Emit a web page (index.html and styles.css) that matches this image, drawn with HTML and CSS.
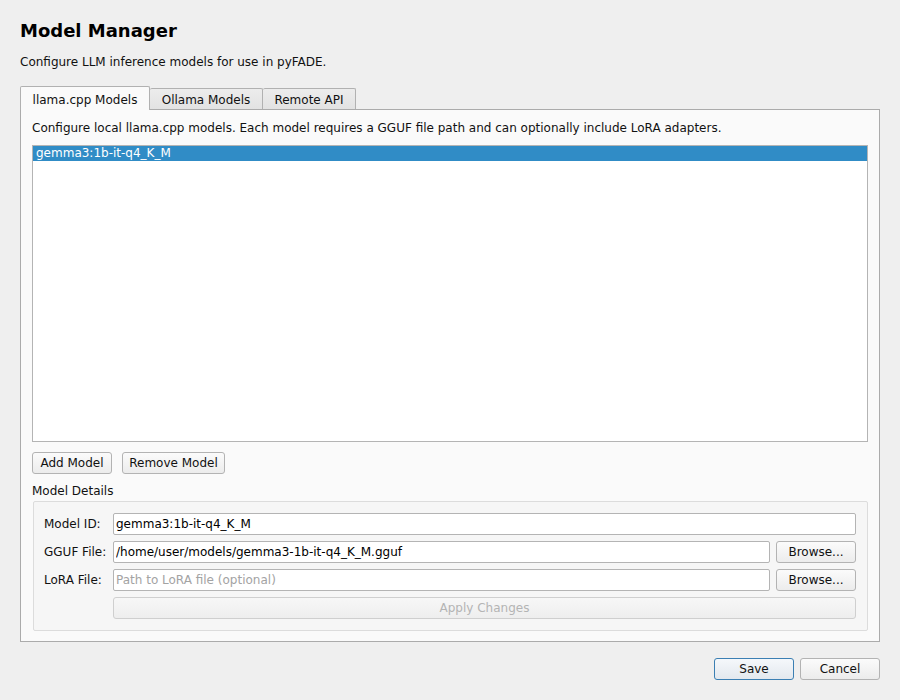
FILE: index.html
```html
<!DOCTYPE html>
<html>
<head>
<meta charset="utf-8">
<link rel="stylesheet" href="styles.css">
</head>
<body>
<div class="dialog">
  <h1 class="title">Model Manager</h1>
  <p class="subtitle">Configure LLM inference models for use in pyFADE.</p>
  <div class="tabs">
    <div class="tabbar">
      <div class="tab active">llama.cpp Models</div>
      <div class="tab">Ollama Models</div>
      <div class="tab">Remote API</div>
    </div>
    <div class="pane">
      <p class="desc">Configure local llama.cpp models. Each model requires a GGUF file path and can optionally include LoRA adapters.</p>
      <div class="list">
        <div class="item selected">gemma3:1b-it-q4_K_M</div>
      </div>
      <div class="btnrow">
        <button class="btn btn-add">Add Model</button>
        <button class="btn btn-remove">Remove Model</button>
      </div>
      <div class="grouptitle">Model Details</div>
      <div class="group">
        <label class="lbl">Model ID:</label>
        <div class="field"><input class="input" type="text" value="gemma3:1b-it-q4_K_M"></div>
        <label class="lbl">GGUF File:</label>
        <div class="field"><input class="input" type="text" value="/home/user/models/gemma3-1b-it-q4_K_M.gguf"><button class="btn btn-browse">Browse...</button></div>
        <label class="lbl">LoRA File:</label>
        <div class="field"><input class="input" type="text" placeholder="Path to LoRA file (optional)"><button class="btn btn-browse">Browse...</button></div>
        <span></span>
        <div class="field"><button class="btn btn-apply" disabled>Apply Changes</button></div>
      </div>
    </div>
  </div>
  <div class="footer">
    <button class="btn btn-default">Save</button>
    <button class="btn btn-cancel">Cancel</button>
  </div>
</div>
</body>
</html>
```

FILE: styles.css
```css
* { box-sizing: border-box; }
html, body {
  margin: 0;
  padding: 0;
  background: #efefef;
}
body {
  font-family: "DejaVu Sans", "Liberation Sans", sans-serif;
  font-size: 12px;
  line-height: 14px;
  color: #111;
}
.dialog {
  width: 900px;
  height: 700px;
  padding: 20px 20px 0 20px;
}
.title {
  margin: 0;
  font-size: 18px;
  line-height: 22px;
  font-weight: bold;
  color: #000;
}
.subtitle {
  margin: 13px 0 0 0;
  line-height: 14px;
}
.tabs {
  margin-top: 17px;
}
.tabbar {
  display: flex;
  align-items: flex-end;
  height: 23px;
}
.tab {
  height: 21px;
  line-height: 19px;
  padding: 2px 0 0 0;
  text-align: center;
  white-space: nowrap;
  border: 1px solid #b1b1b1;
  border-bottom: none;
  border-left: none;
  border-radius: 2px 2px 0 0;
  background: linear-gradient(#ececec, #e2e2e2);
  color: #111;
}
.tab.active {
  height: 24px;
  margin-bottom: -1px;
  border-left: 1px solid #b1b1b1;
  background: #fafafa;
  position: relative;
  z-index: 1;
  padding: 4px 0 0 0;
  width: 130px;
}
.tab:nth-child(2) { width: 113px; }
.tab:nth-child(3) { width: 93px; }
.pane {
  width: 860px;
  height: 533px;
  border: 1px solid #ababab;
  background: #fafafa;
  padding: 11px 11px 10px 11px;
}
.desc {
  margin: 0;
  line-height: 14px;
}
.list {
  margin-top: 10px;
  height: 297px;
  background: #fff;
  border: 1px solid #b4b4b4;
}
.item {
  height: 15px;
  line-height: 15px;
  padding-left: 3px;
}
.item.selected {
  background: #308cc6;
  color: #fff;
}
.btnrow {
  display: flex;
  gap: 10px;
  margin-top: 10px;
}
.btn {
  font-family: inherit;
  font-size: 12px;
  color: #111;
  height: 22px;
  padding: 0;
  white-space: nowrap;
  text-align: center;
  border: 1px solid #b3b3b3;
  border-radius: 3px;
  background: linear-gradient(#fbfbfb, #ececec);
  line-height: 20px;
}
.btn-add { width: 80px; }
.btn-remove { width: 103px; }
.grouptitle {
  margin-top: 10px;
  padding-left: 0;
  line-height: 14px;
}
.group {
  margin: 3px 0 0 1px;
  height: 130px;
  border: 1px solid #dcdcdc;
  border-radius: 2px;
  background: #f6f6f6;
  padding: 11px 11px 11px 10px;
  display: grid;
  grid-template-columns: 63px 1fr;
  column-gap: 6px;
  row-gap: 6px;
  grid-auto-rows: 22px;
}
.lbl {
  line-height: 22px;
  white-space: nowrap;
}
.field {
  display: flex;
  gap: 6px;
}
.input {
  flex: 1;
  min-width: 0;
  height: 22px;
  border: 1px solid #b4b4b4;
  border-radius: 2px;
  background: #fff;
  font-family: inherit;
  font-size: 12px;
  color: #000;
  padding: 0 2px;
  outline: none;
}
.input::placeholder {
  color: #a3a3a3;
}
.btn-browse { width: 80px; flex: none; }
.btn-apply {
  flex: 1;
  color: #b4b4b4;
  border-color: #cfcfcf;
  background: linear-gradient(#f7f7f7, #eeeeee);
}
.footer {
  display: flex;
  justify-content: flex-end;
  gap: 6px;
  margin-top: 16px;
}
.btn-default {
  width: 80px;
  border-color: #3b7fb3;
  background: linear-gradient(#f5f8fb, #e3e8ee);
}
.btn-cancel { width: 80px; }
```
